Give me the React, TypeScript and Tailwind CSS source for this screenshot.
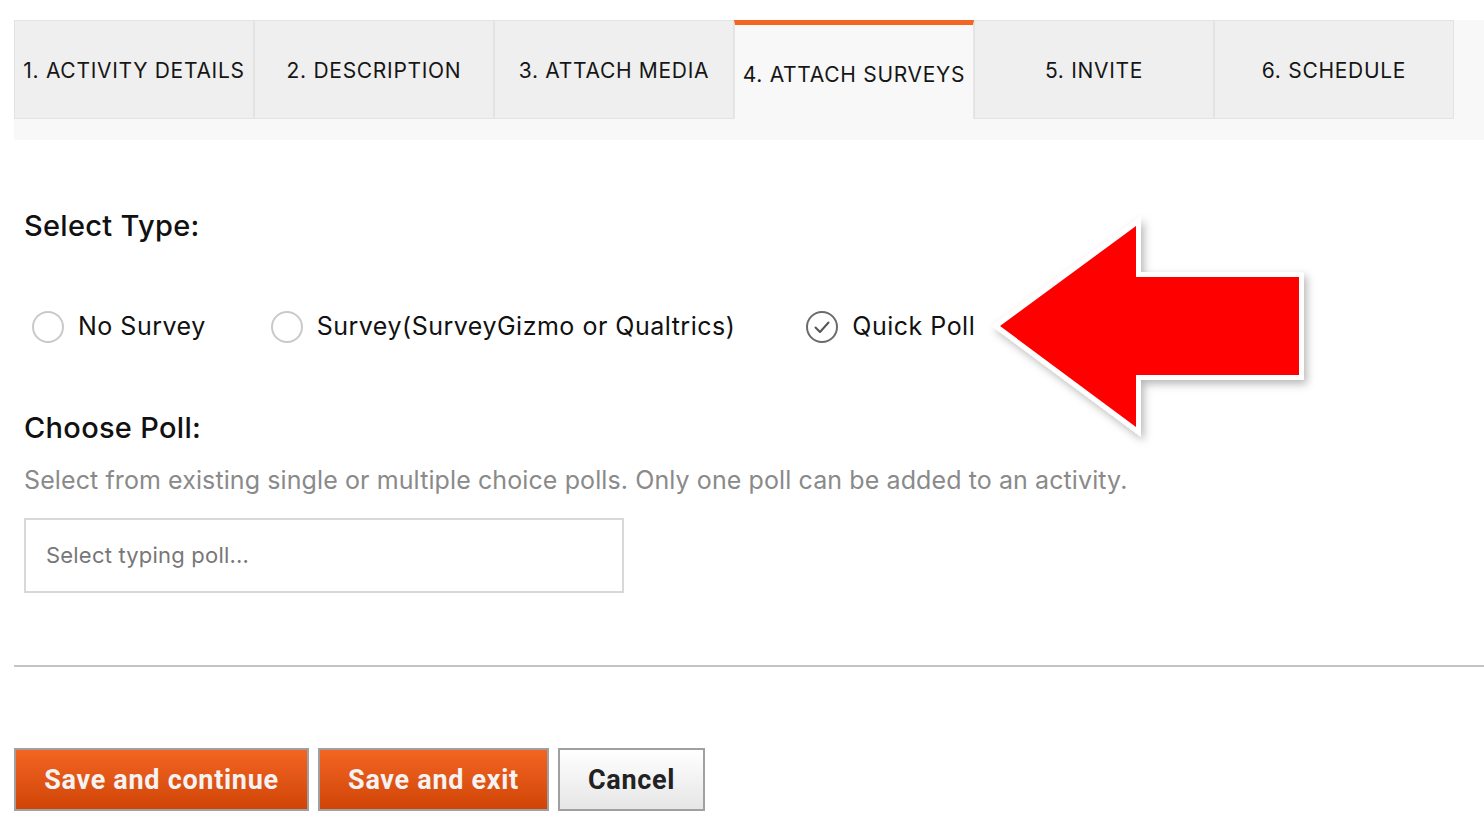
import React, { useState } from "react";

const tabs = [
  "1. ACTIVITY DETAILS",
  "2. DESCRIPTION",
  "3. ATTACH MEDIA",
  "4. ATTACH SURVEYS",
  "5. INVITE",
  "6. SCHEDULE",
];

const surveyTypes = [
  { id: "none", label: "No Survey", gap: "" },
  { id: "survey", label: "Survey(SurveyGizmo or Qualtrics)", gap: "ml-[64px]" },
  { id: "poll", label: "Quick Poll", gap: "ml-[70px]" },
];

// Round radio, the checked one shows a tick instead of a dot
const Radio = ({ checked }: { checked: boolean }) => {
  if (checked) {
    return (
      <svg width="34" height="34" viewBox="0 0 34 34" className="shrink-0">
        <circle cx="17" cy="17" r="15" fill="#fff" stroke="#6b6b6b" strokeWidth="2" />
        <path
          d="M10.5 17.5 L15 22 L23.5 12.5"
          fill="none"
          stroke="#555"
          strokeWidth="2"
          strokeLinecap="round"
          strokeLinejoin="round"
        />
      </svg>
    );
  }
  return (
    <svg width="34" height="34" viewBox="0 0 34 34" className="shrink-0">
      <circle cx="17" cy="17" r="15" fill="#fff" stroke="#c9c9c9" strokeWidth="2" />
    </svg>
  );
};

// The big red call-out arrow laid over the form
const arrowPoints = "20,126 156,26 156,77 319,77 319,175 156,175 156,227";

const CalloutArrow = () => (
  <svg
    width="350"
    height="260"
    viewBox="0 0 350 260"
    className="absolute left-[980px] top-[200px] pointer-events-none"
  >
    <defs>
      <filter id="arrowShadow" x="-20%" y="-20%" width="140%" height="140%">
        <feDropShadow dx="3" dy="4" stdDeviation="4" floodColor="#000" floodOpacity="0.28" />
      </filter>
    </defs>
    {/* white outline sits outside the red shape */}
    <polygon
      points={arrowPoints}
      fill="#ffffff"
      stroke="#ffffff"
      strokeWidth="10"
      strokeLinejoin="miter"
      filter="url(#arrowShadow)"
    />
    <polygon points={arrowPoints} fill="#ff0000" />
  </svg>
);

export default function App() {
  const [active] = useState(3);
  const [surveyType, setSurveyType] = useState("poll");

  return (
    <div className="relative min-h-[836px] bg-white pl-[14px] pt-[20px] font-['Inter',sans-serif] text-[#111]">
      {/* step tabs */}
      <div className="h-[120px] bg-[#f8f8f8]">
        <div className="flex">
          {tabs.map((t, i) =>
            i === active ? (
              <div
                key={t}
                className="flex h-[99px] w-[240px] items-center justify-center border-x border-x-[#e6e6e6] border-t-[5px] border-t-[#f26522] bg-[#f8f8f8] pt-[6px] text-[21px] tracking-[0.7px] text-[#161616]"
              >
                {t}
              </div>
            ) : (
              <div
                key={t}
                className="flex h-[99px] w-[240px] items-center justify-center border border-[#e3e3e3] bg-[#efefef] pt-[3px] text-[21px] tracking-[0.7px] text-[#161616]"
              >
                {t}
              </div>
            )
          )}
        </div>
      </div>

      <div className="pl-[10px]">
        <h2 className="mt-[67px] text-[29px] leading-[38px] font-medium tracking-[0.3px]">Select Type:</h2>

        <div className="mt-[62px] flex h-[40px] items-center pl-[7px]">
          {surveyTypes.map((s) => (
            <label
              key={s.id}
              onClick={() => setSurveyType(s.id)}
              className={`${s.gap} flex cursor-pointer items-center gap-[13px]`}
            >
              <Radio checked={surveyType === s.id} />
              <span className="text-[25px] tracking-[0.5px]">{s.label}</span>
            </label>
          ))}
        </div>

        <h2 className="mt-[62px] text-[29px] leading-[38px] font-medium tracking-[0.3px]">Choose Poll:</h2>
        <p className="mt-[17px] text-[25px] leading-[32px] tracking-[0.1px] text-[#8a8a8a]">
          Select from existing single or multiple choice polls. Only one poll can be added to an activity.
        </p>

        <div className="mt-[22px] flex h-[75px] w-[600px] items-center border-2 border-[#d8d8d8] pl-[20px] text-[22px] tracking-[0.2px] text-[#777]">
          Select typing poll...
        </div>
      </div>

      <div className="mt-[72px] h-[2px] bg-[#c4c4c4]" />

      <div className="mt-[81px] flex gap-[9px] font-['Roboto',sans-serif]">
        <button className="h-[63px] w-[295px] border-2 border-[#a0a0a0] bg-gradient-to-b from-[#f26522] to-[#d04405] pt-[2px] text-[27px] font-bold tracking-[0.7px] text-[#f3f3f3]">
          Save and continue
        </button>
        <button className="h-[63px] w-[231px] border-2 border-[#a0a0a0] bg-gradient-to-b from-[#f26522] to-[#d04405] pt-[2px] text-[27px] font-bold tracking-[0.7px] text-[#f3f3f3]">
          Save and exit
        </button>
        <button className="h-[63px] w-[147px] border-2 border-[#a0a0a0] bg-gradient-to-b from-[#ffffff] to-[#e6e6e6] pt-[2px] text-[27px] font-bold tracking-[0.7px] text-[#222]">
          Cancel
        </button>
      </div>

      <CalloutArrow />
    </div>
  );
}
